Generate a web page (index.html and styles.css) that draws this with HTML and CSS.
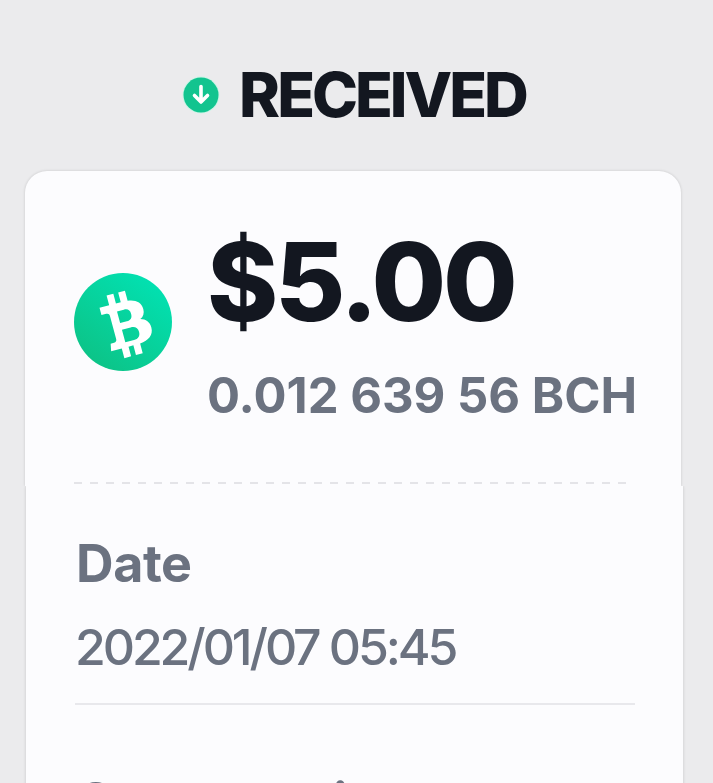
FILE: index.html
```html
<!DOCTYPE html>
<html lang="en">
<head>
<meta charset="utf-8">
<title>Received</title>
<link rel="stylesheet" href="styles.css">
</head>
<body>
<main class="page">
  <header class="status">
    <svg class="status-icon" viewBox="0 0 38 38" aria-hidden="true">
      <circle cx="19" cy="19" r="18.5" fill="#c9f5e6"/>
      <circle cx="19" cy="19" r="17.500" fill="#12c48f"/>
      <path d="M19 10.500v15.500M12.500 19.500l6.500 6.500 6.500-6.500" fill="none" stroke="#fff" stroke-width="3.600" stroke-linecap="round" stroke-linejoin="round"/>
    </svg>
    <h1 class="status-title">RECEIVED</h1>
  </header>
  <section class="card card-top">
    <div class="summary">
      <svg class="coin" viewBox="0 0 98 98" aria-hidden="true">
        <defs>
          <linearGradient id="coinfill" x1="0.8" y1="0.1" x2="0.2" y2="0.9">
            <stop offset="0" stop-color="#02e0b0"/>
            <stop offset="1" stop-color="#0cc488"/>
          </linearGradient>
        </defs>
        <circle cx="49" cy="49" r="49" fill="url(#coinfill)"/>
        <path transform="rotate(-15 50 49)" fill="#fff" fill-rule="evenodd" d="M30 29h10v-10h7v10h5v-10h7v10.400c8 1 13 5 13 12 0 4.500-2 7.500-5.500 9 5.500 1.500 8.500 5.500 8.500 11 0 7.500-6 12-15 12.600v10h-7v-10h-5v10h-7v-10H30l1.500-7.500h3.500c2 0 3-1 3-3V39.500c0-2-1-3-3-3h-5zM46 37v12h7c4 0 6-2 6-6s-2-6-6-6zM46 56v13h9c4.500 0 7-2.500 7-6.500s-2.500-6.500-7-6.500z"/>
      </svg>
      <div class="amounts">
        <p class="fiat">$5.00</p>
        <p class="crypto">0.012 639 56 BCH</p>
      </div>
    </div>
    <div class="divider"></div>
  </section>
  <section class="card card-bottom">
    <div class="row">
      <h2 class="label">Date</h2>
      <p class="value">2022/01/07 05:45</p>
    </div>
    <div class="row">
      <h2 class="label">Current price</h2>
    </div>
  </section>
</main>
</body>
</html>
```
FILE: styles.css
```css
* { box-sizing: border-box; }
html, body { margin: 0; height: 100%; }
body {
  background: #ebebed;
  font-family: Inter, "Liberation Sans", sans-serif;
  overflow: hidden;
}
.page { height: 783px; overflow: hidden; padding-top: 65px; }
.status {
  display: flex;
  align-items: center;
  justify-content: center;
  gap: 19px;
  height: 60px;
  padding-right: 5px;
  margin-bottom: 46px;
}
.status-icon { width: 38px; height: 38px; flex: none; }
.status-title {
  margin: 0;
  font-size: 62px;
  font-weight: 800;
  letter-spacing: -3px;
  line-height: 60px;
  color: #131720;
}
.card {
  background: #fcfcfe;
  box-shadow: 0 0 3px rgba(0,0,0,0.16);
}
.card-top {
  margin: 0 32px 0 25px;
  height: 315px;
  border-radius: 22px 22px 0 0;
  padding: 0 0 0 49px;
  clip-path: inset(-5px -5px 0 -5px);
}
.summary {
  display: flex;
  align-items: center;
  gap: 35px;
  height: 265px;
  padding-top: 37px;
}
.coin { width: 98px; height: 98px; flex: none; }
.amounts { margin-top: -6px; }
.fiat {
  margin: 0;
  font-size: 108px;
  font-weight: 800;
  line-height: 136px;
  letter-spacing: -3.200px;
  color: #131720;
}
.crypto {
  margin: 18px 0 0;
  font-size: 49px;
  font-weight: 700;
  line-height: 56px;
  color: #6b7280;
  white-space: nowrap;
}
.divider {
  width: 552px;
  height: 2px;
  margin-top: 46px;
  background: repeating-linear-gradient(90deg, #e4e4e8 0 8px, transparent 8px 16px);
}
.card-bottom {
  margin: 0 30px 0 26px;
  padding: 0 48px 0 49px;
  height: 400px;
  clip-path: inset(0 -5px -5px -5px);
}
.row { border-bottom: 2px solid #e8e8ec; padding-top: 50px; height: 219px; }
.row:last-child { border-bottom: 0; padding-top: 69px; }
.label { margin: 0 0 0 1px; font-size: 52px; font-weight: 700; color: #6b7280; line-height: 56px; letter-spacing: -0.400px; }
.value { margin: 27px 0 0; font-size: 50px; font-weight: 500; color: #6b7280; line-height: 56px; letter-spacing: -3.100px; }
```
